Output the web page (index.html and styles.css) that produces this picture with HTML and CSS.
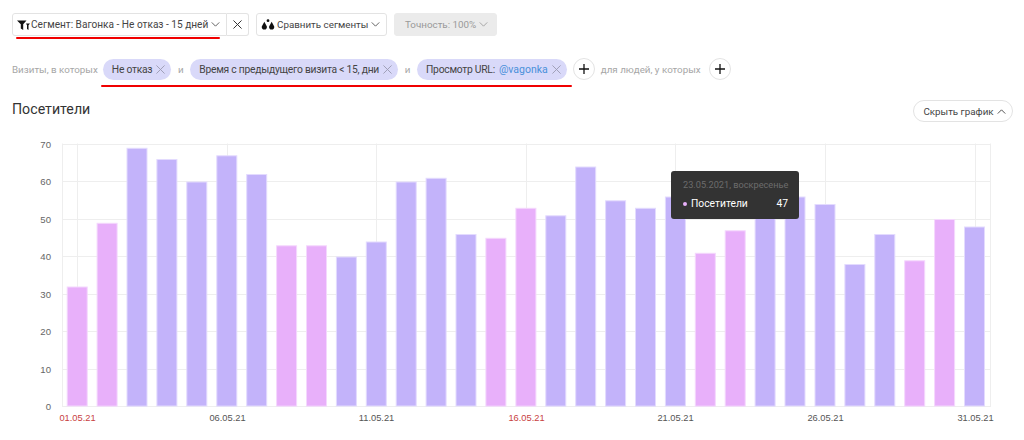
FILE: index.html
```html
<!DOCTYPE html>
<html lang="en">
<head>
    <meta charset="UTF-8">
    <meta name="viewport" content="width=device-width, initial-scale=1.0">
    <title>Посетители</title>
    <link rel="stylesheet" href="styles.css">
</head>
<body>
    <div class="container">
        <div class="toolbar">
            <div class="btn-group">
                <button class="btn segment-btn">
                    <svg class="icon" width="13" height="10" viewBox="0 0 13 10"><path d="M0 .5h9.500L6.200 4.200V10L3.800 8.500V4.200z" fill="#111"/><path d="M9 3.500h4L11.500 5.300V10L10 9V5.300z" fill="#111"/></svg>
                    Сегмент: Вагонка - Не отказ - 15 дней
                    <svg class="chevron" width="9" height="5" viewBox="0 0 10 6"><path d="M.5.5 5 5 9.500.5" fill="none" stroke="#444" stroke-width="1"/></svg>
                </button>
                <button class="btn close-btn">
                    <svg width="9" height="9" viewBox="0 0 10 10"><path d="M.5.5l9 9M9.500.5l-9 9" stroke="#333" stroke-width="1.100" fill="none"/></svg>
                </button>
            </div>
            <button class="btn compare-btn">
                <svg class="icon" width="14" height="11" viewBox="0 0 15 12"><circle cx="7.500" cy="1.800" r="1.500" fill="#111"/><path d="M3.500 3 1 7.500a2.800 2.800 0 1 0 5 0zM11.500 3 9 7.500a2.800 2.800 0 1 0 5 0z" fill="#111"/></svg>
                Сравнить сегменты
                <svg class="chevron" width="9" height="5" viewBox="0 0 10 6"><path d="M.5.5 5 5 9.500.5" fill="none" stroke="#444" stroke-width="1"/></svg>
            </button>
            <button class="btn accuracy-btn" disabled>
                Точность: 100%
                <svg class="chevron" width="9" height="5" viewBox="0 0 10 6"><path d="M.5.5 5 5 9.500.5" fill="none" stroke="#999" stroke-width="1"/></svg>
            </button>
        </div>

        <div class="filters">
            <span class="muted lead">Визиты, в которых</span>
            <span class="chip">Не отказ <svg class="chip-x" width="9" height="9" viewBox="0 0 10 10"><path d="M.5.5l9 9M9.500.5l-9 9" stroke="#9a9ab0" fill="none"/></svg></span>
            <span class="muted joiner">и</span>
            <span class="chip">Время с предыдущего визита &lt; 15, дни <svg class="chip-x" width="9" height="9" viewBox="0 0 10 10"><path d="M.5.5l9 9M9.500.5l-9 9" stroke="#9a9ab0" fill="none"/></svg></span>
            <span class="muted joiner">и</span>
            <span class="chip">Просмотр URL: <a class="chip-link">@vagonka</a> <svg class="chip-x" width="9" height="9" viewBox="0 0 10 10"><path d="M.5.5l9 9M9.500.5l-9 9" stroke="#9a9ab0" fill="none"/></svg></span>
            <button class="add-btn"><svg width="10" height="10" viewBox="0 0 10 10"><path d="M5 0v10M0 5h10" stroke="#111" stroke-width="1.300" fill="none"/></svg></button>
            <span class="muted">для людей, у которых</span>
            <button class="add-btn add-last"><svg width="10" height="10" viewBox="0 0 10 10"><path d="M5 0v10M0 5h10" stroke="#111" stroke-width="1.300" fill="none"/></svg></button>
        </div>

        <div class="chart-head">
            <h2>Посетители</h2>
            <button class="hide-btn">
                Скрыть график
                <svg class="chevron" width="9" height="5" viewBox="0 0 10 6"><path d="M.5 5.500 5 1l4.500 4.500" fill="none" stroke="#333" stroke-width="1"/></svg>
            </button>
        </div>

        <div class="chart-wrap">
            <svg id="chart" width="1024" height="300"></svg>
            <div class="tooltip">
                <div class="tooltip-date">23.05.2021, воскресенье</div>
                <div class="tooltip-row">
                    <span class="tooltip-dot"></span>
                    <span class="tooltip-name">Посетители</span>
                    <span>47</span>
                </div>
            </div>
        </div>

        <!-- red marks drawn over the screenshot -->
        <div class="mark mark-one"></div>
        <div class="mark mark-two"></div>
    </div>
    <script src="chart.js"></script>
</body>
</html>
```

FILE: styles.css
```css
* {
    margin: 0;
    padding: 0;
    box-sizing: border-box;
}
body {
    font-family: Roboto, "Liberation Sans", sans-serif;
    background-color: #fff;
    color: #333;
    width: 1024px;
    height: 440px;
    overflow: hidden;
}
.container {
    position: relative;
    height: 440px;
    padding: 13px 11px 0 12px;
}
.toolbar {
    display: flex;
    gap: 7px;
    height: 23px;
}
.btn-group {
    display: flex;
}
.btn {
    display: flex;
    align-items: center;
    height: 23px;
    background: #fff;
    border: 1px solid #e3e3e3;
    border-radius: 3px;
    font-family: inherit;
    font-size: 9.800px;
    color: #444;
    white-space: nowrap;
}
.segment-btn {
    width: 215px;
    padding-left: 4px;
    border-radius: 3px 0 0 3px;
    font-size: 10.100px;
}
.segment-btn .icon {
    margin-right: 1px;
}
.close-btn {
    width: 22px;
    justify-content: center;
    border-left: none;
    border-radius: 0 3px 3px 0;
}
.compare-btn {
    width: 131px;
    padding-left: 4px;
}
.accuracy-btn {
    width: 103px;
    padding-left: 10px;
    background: #ebebeb;
    border-color: #ebebeb;
    color: #999;
}
.icon {
    margin-right: 2px;
    flex: none;
}
.chevron {
    margin-left: 3px;
    flex: none;
}
.filters {
    display: flex;
    align-items: center;
    height: 22px;
    margin-top: 22px;
    font-size: 10.300px;
    letter-spacing: -0.25px;
}
.muted {
    color: #a6a6a6;
    font-size: 9.800px;
    letter-spacing: 0;
    white-space: nowrap;
}
.lead {
    margin-right: 5px;
}
.joiner {
    width: 19px;
    text-align: center;
}
.chip {
    display: flex;
    align-items: center;
    gap: 4px;
    height: 21px;
    padding: 0 6px 0 9px;
    background: #d9d9f9;
    border-radius: 11px;
    color: #444;
    white-space: nowrap;
}
.chip-link {
    color: #4a90d9;
    font-size: 10.500px;
    letter-spacing: 0;
}
.chip-x {
    flex: none;
}
.add-btn {
    display: flex;
    align-items: center;
    justify-content: center;
    flex: none;
    width: 22px;
    height: 22px;
    margin: 0 6px;
    background: #fff;
    border: 1px solid #e3e3e3;
    border-radius: 50%;
}
.add-last {
    margin-left: 8px;
}
.chart-head {
    display: flex;
    align-items: center;
    justify-content: space-between;
    height: 22px;
    margin-top: 20px;
}
h2 {
    font-size: 14.200px;
    font-weight: 400;
    color: #333;
    margin-top: -5px;
}
.hide-btn {
    display: flex;
    align-items: center;
    justify-content: center;
    width: 100px;
    height: 22px;
    padding-left: 3px;
    background: #fff;
    border: 1px solid #e3e3e3;
    border-radius: 11px;
    font-family: inherit;
    font-size: 9.800px;
    color: #444;
    white-space: nowrap;
}
.chart-wrap {
    position: absolute;
    left: 0;
    top: 130px;
    width: 1024px;
    height: 300px;
}
#chart {
    display: block;
}
#chart text {
    font-family: "Liberation Sans", Arial, sans-serif;
    font-size: 9.600px;
    fill: #666;
}
#chart text.day {
    font-size: 9.300px;
    fill: #555;
}
#chart text.red {
    font-size: 9.300px;
    fill: #c8413f;
}
.grid {
    stroke: #eeeeee;
    stroke-width: 1;
}
.bar-blue {
    fill: #c3b3fa;
    stroke: #e3dbfe;
    stroke-width: 1;
}
.bar-pink {
    fill: #e8b0fa;
    stroke: #f4d8fd;
    stroke-width: 1;
}
.tooltip {
    position: absolute;
    left: 671px;
    top: 41px;
    width: 128px;
    height: 48px;
    padding: 8px 11px 0 12px;
    background: #333;
    border-radius: 3px;
}
.tooltip-date {
    font-size: 9.200px;
    color: #6c6c6c;
    white-space: nowrap;
}
.tooltip-row {
    display: flex;
    align-items: center;
    margin-top: 7px;
    font-size: 10.300px;
    color: #fff;
}
.tooltip-dot {
    width: 4px;
    height: 4px;
    margin-right: 4px;
    background: #e8b0fa;
    border-radius: 50%;
}
.tooltip-name {
    flex: 1;
}
.mark {
    position: absolute;
    height: 2px;
    background: #f00000;
    border-radius: 1px;
}
.mark-one {
    left: 16px;
    top: 37px;
    width: 204px;
}
.mark-two {
    left: 101px;
    top: 85px;
    width: 471px;
}
```

FILE: chart.js
```js
// visits per day, May 2021
var values = [32, 49, 69, 66, 60, 67, 62, 43, 43, 40, 44, 60, 61, 46, 45, 53, 51, 64, 55, 53, 56, 41, 47, 55, 56, 54, 38, 46, 39, 50, 48];
var weekend = [0, 1, 7, 8, 14, 15, 21, 22, 28, 29];

var svg = document.getElementById('chart');
var NS = 'http://www.w3.org/2000/svg';
var left = 62.5, right = 990.5, zero = 276, perUnit = 3.75;

function add(tag, attrs, text) {
    var el = document.createElementNS(NS, tag);
    for (var k in attrs) el.setAttribute(k, attrs[k]);
    if (text) el.textContent = text;
    svg.appendChild(el);
}

// horizontal grid and y labels
for (var v = 0; v <= 70; v += 10) {
    var y = Math.round(zero - v * perUnit) + 0.5;
    add('line', { x1: left, x2: right, y1: y, y2: y, 'class': 'grid' });
    add('text', { x: 51, y: y + 3.5, 'text-anchor': 'end' }, String(v));
}
add('line', { x1: left, x2: left, y1: 13.5, y2: zero + 1, 'class': 'grid' });
add('line', { x1: right, x2: right, y1: 13.5, y2: zero + 1, 'class': 'grid' });

// vertical grid and x labels
[1, 6, 11, 16, 21, 26, 31].forEach(function (day) {
    var x = Math.round(77.2 + (day - 1) * 29.91) + 0.5;
    var red = day === 1 || day === 16;
    add('line', { x1: x, x2: x, y1: 13.5, y2: zero, 'class': 'grid' });
    add('text', {
        x: x,
        y: 291,
        'text-anchor': 'middle',
        'class': red ? 'red' : 'day'
    }, (day < 10 ? '0' + day : day) + '.05.21');
});

// bars
values.forEach(function (val, i) {
    var x = 67.2 + i * 29.91;
    var h = val * perUnit;
    add('rect', {
        x: x.toFixed(1),
        y: (zero - h + 1).toFixed(1),
        width: 20,
        height: (h - 1).toFixed(1),
        'class': weekend.indexOf(i) >= 0 ? 'bar-pink' : 'bar-blue'
    });
});
```
